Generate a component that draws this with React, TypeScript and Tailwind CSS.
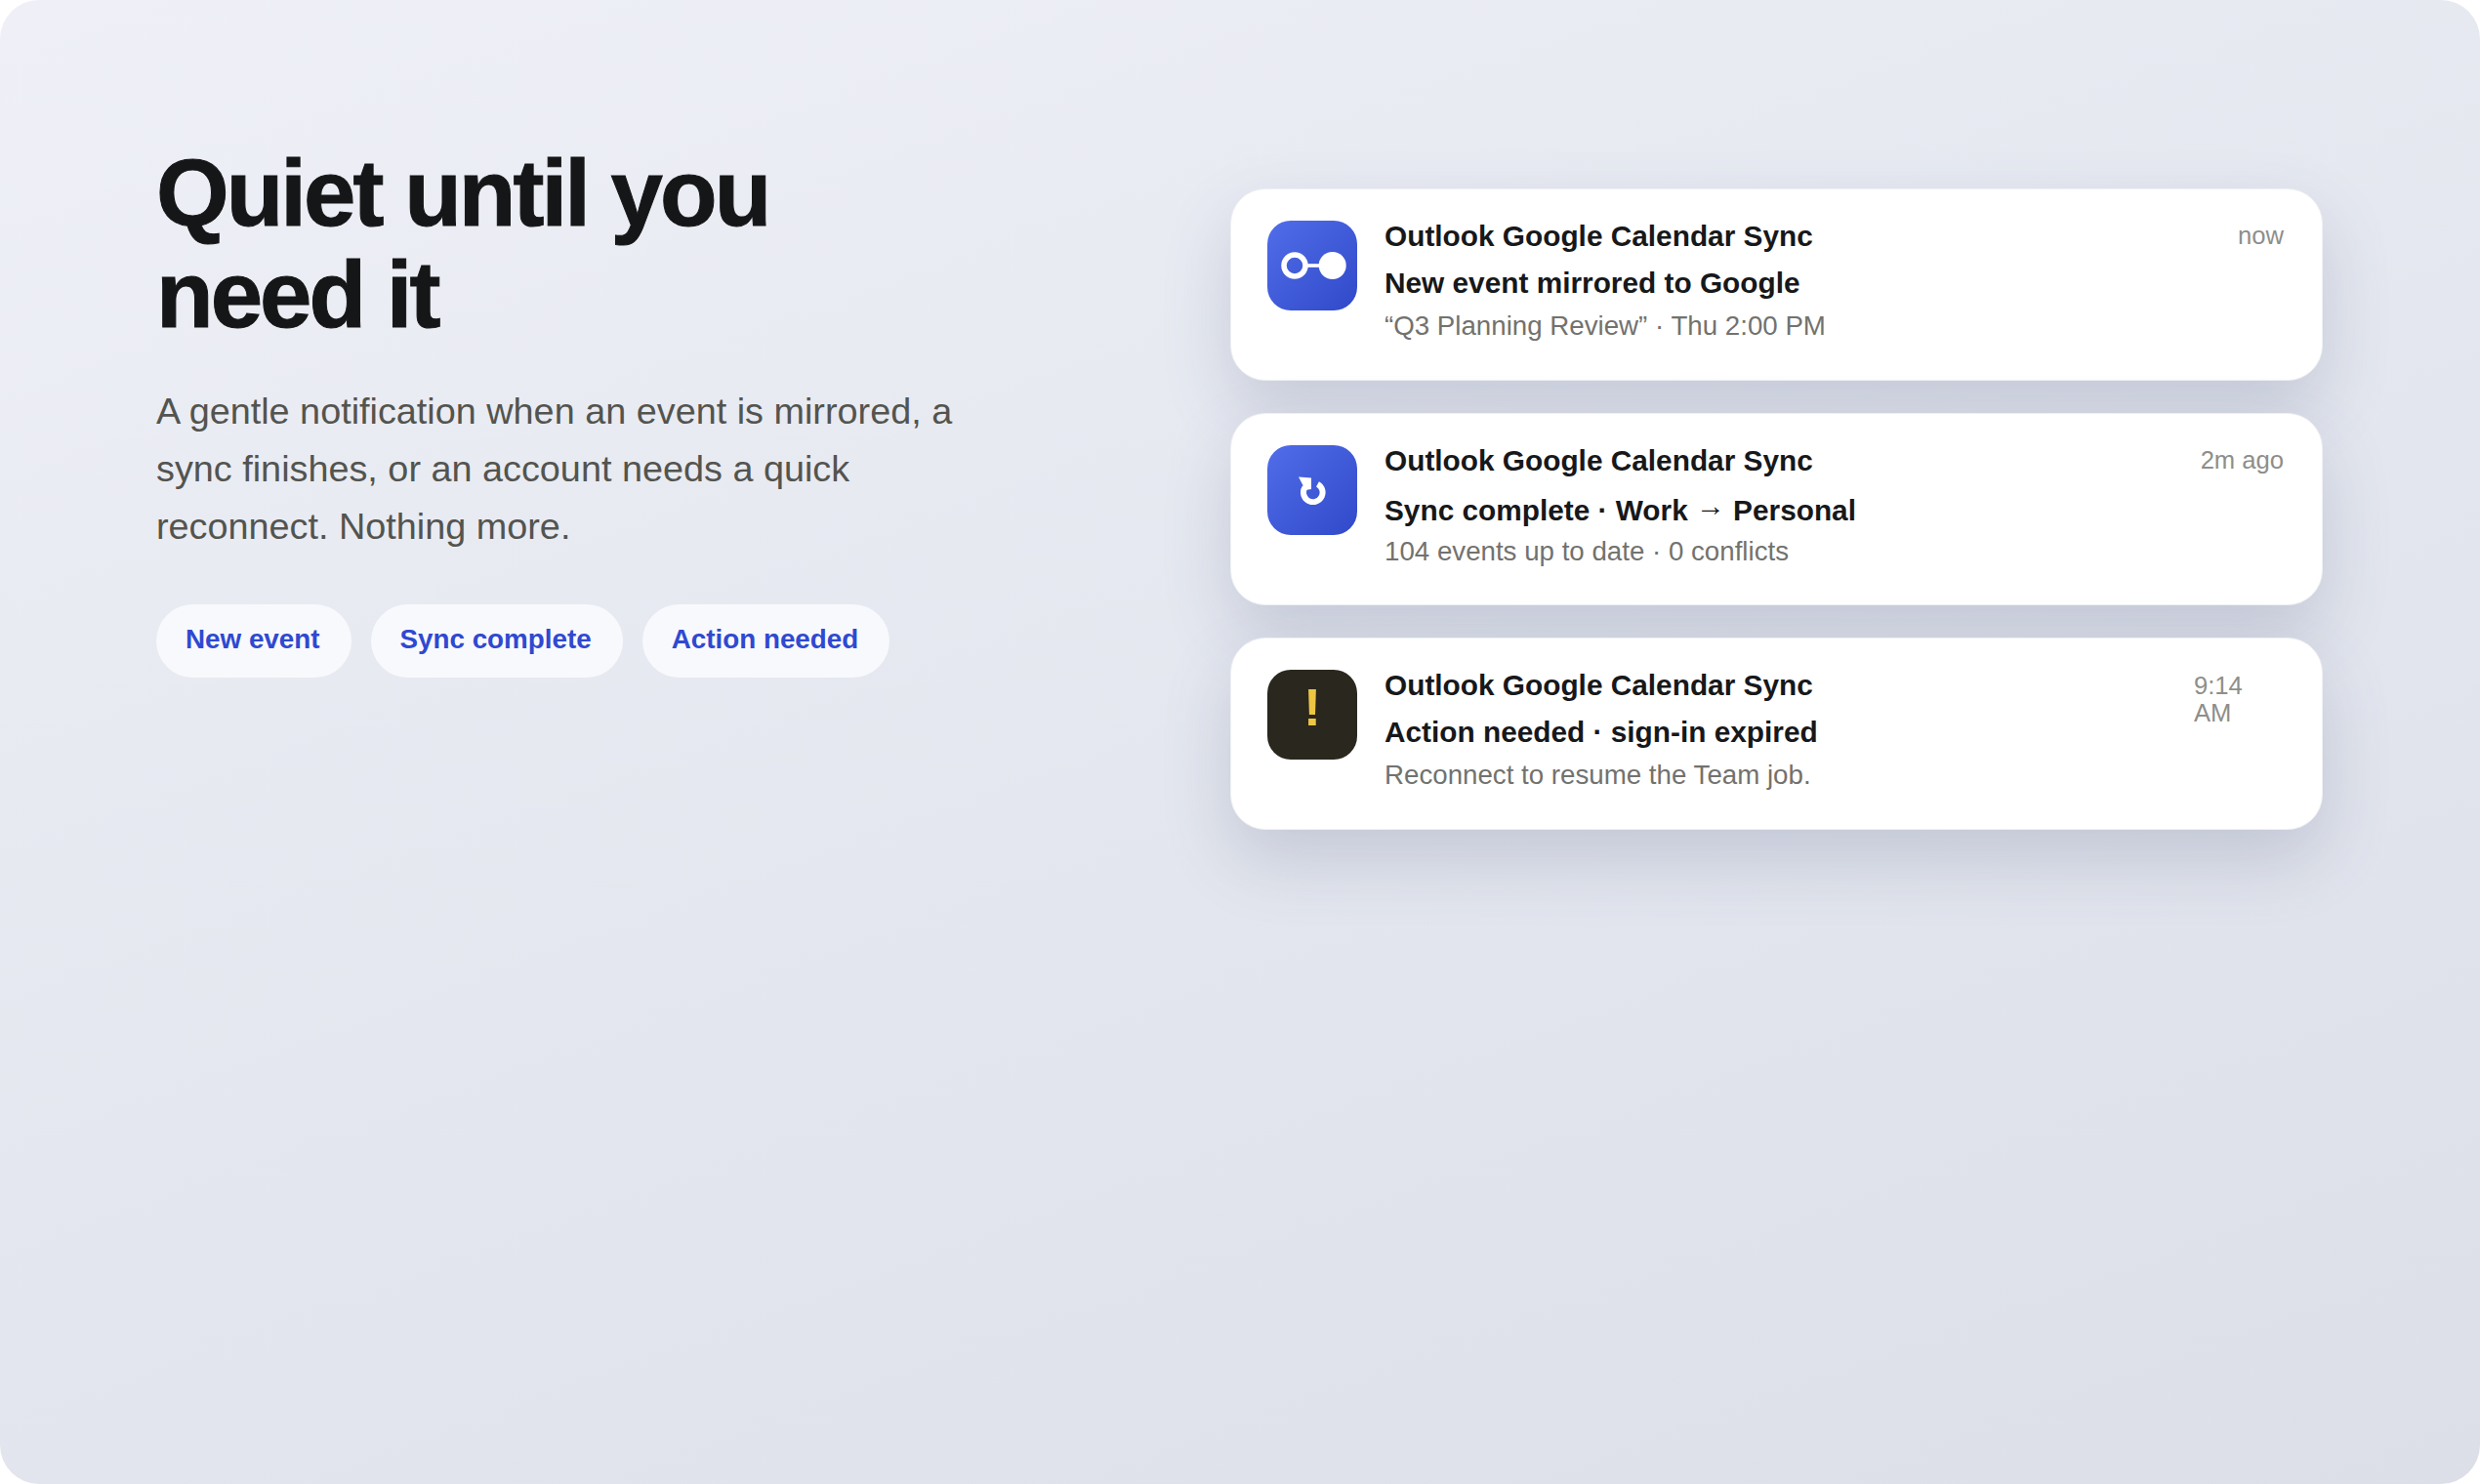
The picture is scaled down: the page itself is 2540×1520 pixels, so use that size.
const cards = [
  {
    icon: "link",
    title: <>New event mirrored to Google</>,
    sub: "“Q3 Planning Review” · Thu 2:00 PM",
    time: "now",
  },
  {
    icon: "sync",
    title: (
      <>
        Sync complete · Work <span className="align-[5px] leading-none">→</span> Personal
      </>
    ),
    sub: "104 events up to date · 0 conflicts",
    time: "2m ago",
  },
  {
    icon: "alert",
    title: <>Action needed · sign-in expired</>,
    sub: "Reconnect to resume the Team job.",
    time: "9:14 AM",
  },
];

function Tile({ icon }: { icon: string }) {
  if (icon === "alert") {
    return (
      <div className="flex h-[92px] w-[92px] shrink-0 items-center justify-center rounded-[24px] bg-[#2a271e] pb-[16px] text-[54px] font-bold leading-none text-[#eec643]">
        !
      </div>
    );
  }
  return (
    <div className="flex h-[92px] w-[92px] shrink-0 items-center justify-center rounded-[24px] bg-gradient-to-br from-[#526de9] to-[#3049c9] text-white">
      {icon === "link" ? (
        <svg width="70" height="30" viewBox="0 0 70 30">
          <circle cx="17" cy="15" r="11" fill="none" stroke="white" strokeWidth="5.5" />
          <rect x="29" y="13.2" width="16" height="3.6" fill="white" />
          <circle cx="55.7" cy="15" r="14" fill="white" />
        </svg>
      ) : (
        <svg width="30" height="30" viewBox="0 0 30 30">
          <path d="M20.5 8.8A9.8 9.8 0 1 1 7.6 12" fill="none" stroke="white" strokeWidth="6" />
          <path d="M1 1.5L14 2.5V14L8 15Z" fill="white" />
        </svg>
      )}
    </div>
  );
}

export default function App() {
  return (
    <div className="min-h-screen bg-white font-['Liberation_Sans',sans-serif]">
      <div className="grid h-[1520px] w-[2540px] grid-cols-[1100px_1119px] justify-between rounded-[40px] bg-[linear-gradient(160deg,#eff0f7_0%,#e4e7ef_50%,#dcdfe8_100%)] pl-[160px] pr-[161px]">
        <div className="pt-[146px]">
          <h1 className="text-[96px] font-bold leading-[104px] tracking-[-0.031em] text-[#151617] [-webkit-text-stroke:1px_#151617]">
            Quiet until you
            <br />
            need it
          </h1>
          <p className="mt-[38px] w-[860px] text-[37.8px] leading-[59px] text-[#53544f]">
            A gentle notification when an event is mirrored, a sync finishes, or an account needs a quick reconnect. Nothing more.
          </p>
          <div className="mt-[50px] flex gap-[20px]">
            {["New event", "Sync complete", "Action needed"].map((chip) => (
              <span
                key={chip}
                className="flex h-[75px] items-center rounded-full bg-[#f8f9fc] pb-[3px] pl-[30px] pr-[32px] text-[27.8px] font-bold text-[#2f49d1]"
              >
                {chip}
              </span>
            ))}
          </div>
        </div>
        <div className="flex flex-col gap-[33px] pt-[193px]">
          {cards.map((card) => (
            <div
              key={card.icon}
              className="flex h-[197px] gap-[28px] rounded-[36px] border border-[#eef0f5] bg-white pl-[37px] pr-[39px] pt-[32px] shadow-[0_30px_70px_rgba(70,80,120,0.2)]"
            >
              <Tile icon={card.icon} />
              <div className="-mt-[3px] flex-1">
                <div className="text-[29.8px] font-bold leading-[38px] text-[#17181a]">Outlook Google Calendar Sync</div>
                <div className={card.icon === "sync" ? "mt-[12px] text-[29.8px] font-bold leading-[38px] text-[#17181a]" : "mt-[10px] text-[29.8px] font-bold leading-[38px] text-[#17181a]"}>
                  {card.title}
                </div>
                <div className={card.icon === "sync" ? "mt-[4px] text-[27.7px] leading-[38px] text-[#72726e]" : "mt-[6px] text-[27.7px] leading-[38px] text-[#72726e]"}>
                  {card.sub}
                </div>
              </div>
              <div className={card.icon === "alert" ? "mt-[2px] w-[92px] text-[25.6px] leading-[28px] text-[#8e8e8a]" : "mt-[1px] text-[25.6px] leading-[29px] text-[#8e8e8a]"}>
                {card.time}
              </div>
            </div>
          ))}
        </div>
      </div>
    </div>
  );
}
